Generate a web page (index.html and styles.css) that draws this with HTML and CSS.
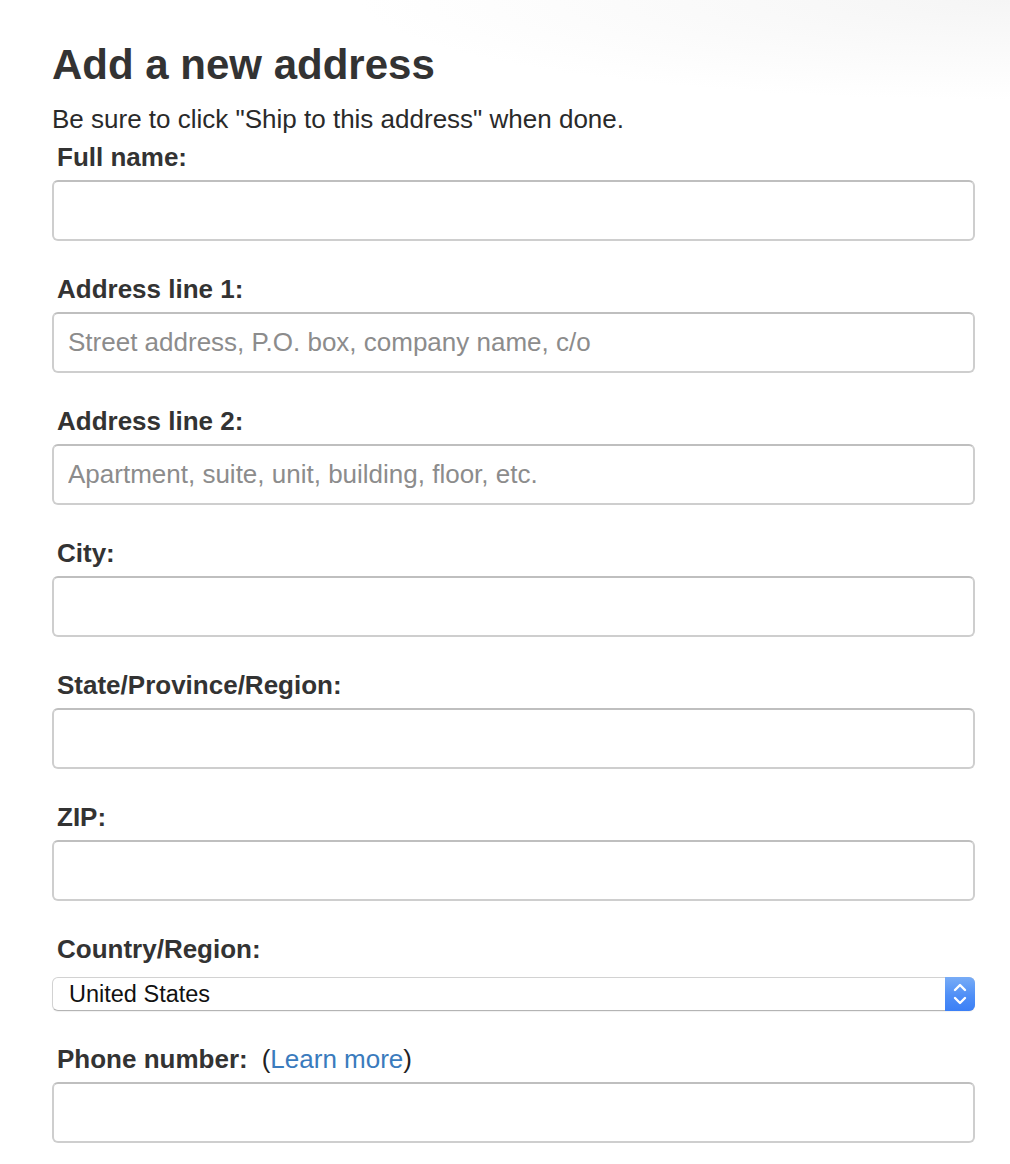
FILE: index.html
```html
<!DOCTYPE html>
<html lang="en">
<head>
<meta charset="utf-8">
<title>Add a new address</title>
<link rel="stylesheet" href="styles.css">
</head>
<body>
<div class="page">
  <h1 class="title">Add a new address</h1>
  <p class="hint">Be sure to click "Ship to this address" when done.</p>
  <form class="form">
    <div class="field">
      <label class="label" for="f-name">Full name:</label>
      <input class="input" id="f-name" type="text">
    </div>
    <div class="field">
      <label class="label" for="f-a1">Address line 1:</label>
      <input class="input" id="f-a1" type="text" placeholder="Street address, P.O. box, company name, c/o">
    </div>
    <div class="field">
      <label class="label" for="f-a2">Address line 2:</label>
      <input class="input" id="f-a2" type="text" placeholder="Apartment, suite, unit, building, floor, etc.">
    </div>
    <div class="field">
      <label class="label" for="f-city">City:</label>
      <input class="input" id="f-city" type="text">
    </div>
    <div class="field">
      <label class="label" for="f-state">State/Province/Region:</label>
      <input class="input" id="f-state" type="text">
    </div>
    <div class="field">
      <label class="label" for="f-zip">ZIP:</label>
      <input class="input" id="f-zip" type="text">
    </div>
    <div class="field">
      <label class="label label-select" for="f-country">Country/Region:</label>
      <div class="select-wrap">
        <select class="select" id="f-country">
          <option>United States</option>
        </select>
        <span class="select-btn" aria-hidden="true">
          <svg width="30" height="34" viewBox="0 0 30 34">
            <path d="M10 13 L15 8 L20 13" fill="none" stroke="#fff" stroke-width="2.4" stroke-linecap="round" stroke-linejoin="round"/>
            <path d="M10 21 L15 26 L20 21" fill="none" stroke="#fff" stroke-width="2.4" stroke-linecap="round" stroke-linejoin="round"/>
          </svg>
        </span>
      </div>
    </div>
    <div class="field">
      <label class="label" for="f-phone">Phone number:<span class="label-extra">(<a class="link" href="#">Learn more</a>)</span></label>
      <input class="input" id="f-phone" type="text">
    </div>
  </form>
</div>
</body>
</html>
```

FILE: styles.css
```css
html, body {
  margin: 0;
  padding: 0;
}

body {
  background: #fff radial-gradient(650px 100px at 100% 0, #f5f5f5 0%, rgba(255,255,255,0) 100%) no-repeat;
  font-family: "Liberation Sans", Arial, sans-serif;
  color: #333;
  min-height: 1164px;
}

.page {
  width: 923px;
  padding: 41px 0 0 52px;
}

.title {
  margin: 0;
  font-size: 42px;
  line-height: 48px;
  font-weight: bold;
  color: #333;
}

.hint {
  margin: 15px 0 0;
  font-size: 26px;
  line-height: 30px;
  color: #2a2a2a;
}

.form {
  display: flex;
  flex-direction: column;
  gap: 33px;
  margin-top: 8px;
}

.field {
  display: flex;
  flex-direction: column;
}

.label {
  display: block;
  padding-left: 5px;
  margin-bottom: 8px;
  font-size: 26px;
  line-height: 30px;
  font-weight: bold;
  color: #333;
}

.label-select {
  margin-bottom: 13px;
}

.label-extra {
  font-weight: normal;
  margin-left: 14px;
  color: #222;
}

.link {
  color: #3a7bbd;
  text-decoration: none;
}

.input {
  display: block;
  box-sizing: border-box;
  width: 100%;
  height: 61px;
  margin: 0;
  padding: 0 14px;
  border: 2px solid #cecece;
  border-top-color: #bfbfbf;
  border-radius: 6px;
  background: #fff;
  font-family: "Liberation Sans", Arial, sans-serif;
  font-size: 26px;
  color: #111;
  outline: none;
}

.input::placeholder {
  color: #8c8c8c;
  opacity: 1;
}

.select-wrap {
  position: relative;
  height: 34px;
}

.select {
  -webkit-appearance: none;
  appearance: none;
  display: block;
  box-sizing: border-box;
  width: 100%;
  height: 34px;
  margin: 0;
  padding: 0 40px 0 16px;
  border: 1px solid #d2d2d2;
  border-bottom-color: #b4b4b4;
  border-radius: 6px;
  background: #fff;
  box-shadow: 0 1px 1px rgba(0,0,0,0.06);
  font-family: "Liberation Sans", Arial, sans-serif;
  font-size: 23.5px;
  line-height: 32px;
  color: #111;
  outline: none;
}

.select-btn {
  position: absolute;
  top: 0;
  right: 0;
  width: 30px;
  height: 34px;
  box-sizing: border-box;
  border-radius: 0 6px 6px 0;
  background: linear-gradient(to bottom, #78acf6 0%, #4f8ff7 55%, #3b7ff6 100%);
  display: flex;
  align-items: center;
  justify-content: center;
}
```
